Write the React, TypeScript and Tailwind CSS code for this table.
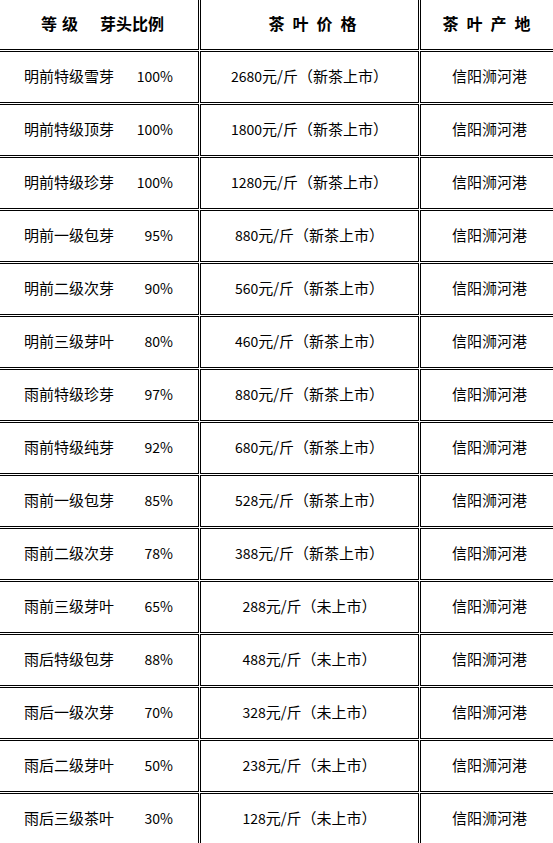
const ROWS: [string, string, string, string][] = [
  ['明前特级雪芽', '100%', '2680', '新茶上市'],
  ['明前特级顶芽', '100%', '1800', '新茶上市'],
  ['明前特级珍芽', '100%', '1280', '新茶上市'],
  ['明前一级包芽', '95%', '880', '新茶上市'],
  ['明前二级次芽', '90%', '560', '新茶上市'],
  ['明前三级芽叶', '80%', '460', '新茶上市'],
  ['雨前特级珍芽', '97%', '880', '新茶上市'],
  ['雨前特级纯芽', '92%', '680', '新茶上市'],
  ['雨前一级包芽', '85%', '528', '新茶上市'],
  ['雨前二级次芽', '78%', '388', '新茶上市'],
  ['雨前三级芽叶', '65%', '288', '未上市'],
  ['雨后特级包芽', '88%', '488', '未上市'],
  ['雨后一级次芽', '70%', '328', '未上市'],
  ['雨后二级芽叶', '50%', '238', '未上市'],
  ['雨后三级茶叶', '30%', '128', '未上市'],
]

const cell = 'h-[52px] border border-black flex items-center pb-[3px]'

export default function App() {
  return (
    <div className="h-screen w-screen overflow-hidden bg-white text-black [font-family:'Noto_Sans_CJK_SC',sans-serif]">
      <div className="-ml-px -mt-[2px] grid grid-cols-[200px_219px_139px] gap-px w-max text-[15px] leading-none">
        {/* header */}
        <div className={`${cell} justify-center pl-[7px] text-[16px] font-bold`}>
          <span>等</span>
          <span className="ml-[5px]">级</span>
          <span className="ml-[22px]">芽头比例</span>
        </div>
        <div className={`${cell} justify-center gap-[8px] pl-[6px] text-[16px] font-bold`}>
          <span>茶</span><span>叶</span><span>价</span><span>格</span>
        </div>
        <div className={`${cell} justify-center gap-[8px] pr-[6px] text-[16px] font-bold`}>
          <span>茶</span><span>叶</span><span>产</span><span>地</span>
        </div>

        {ROWS.map(([name, pct, price, note], i) => (
          <div key={i} className="contents">
            <div className={`${cell} justify-between pl-[24px] pr-[25px]`}>
              <span>{name}</span>
              <span className="text-[14px]">{pct}</span>
            </div>
            <div className={`${cell} justify-center`}>
              <span className="text-[14px]">{price}</span>元/斤（{note}）
            </div>
            <div className={`${cell} justify-center`}>信阳浉河港</div>
          </div>
        ))}
      </div>
    </div>
  )
}
